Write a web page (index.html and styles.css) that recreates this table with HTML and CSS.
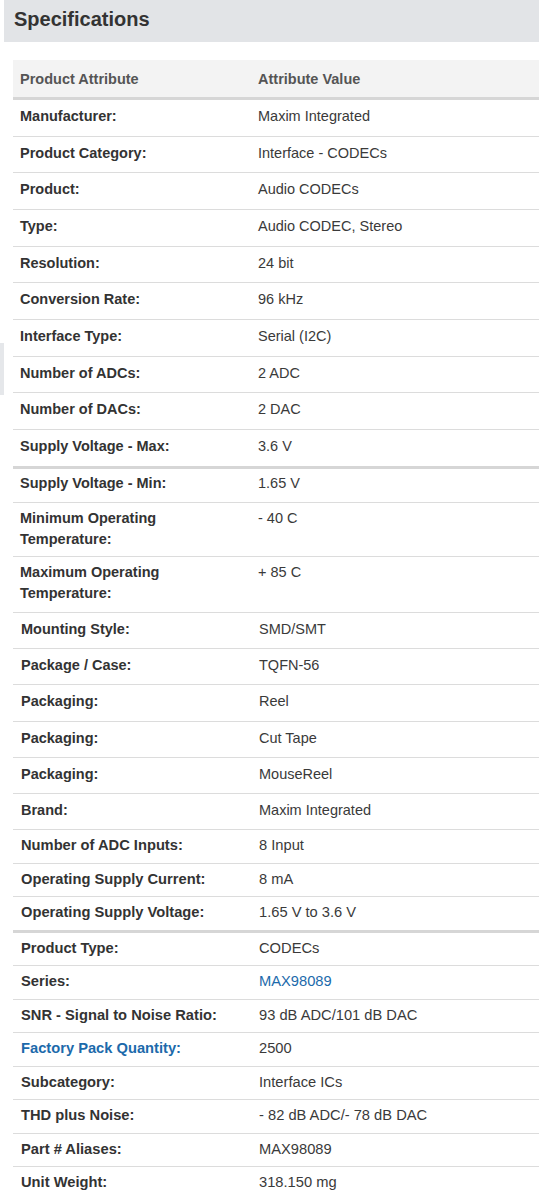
FILE: index.html
```html
<!DOCTYPE html>
<html lang="en">
<head>
<meta charset="utf-8">
<title>Specifications</title>
<link rel="stylesheet" href="styles.css">
</head>
<body>
<div class="page">
  <div class="side-tab"></div>
  <h2 class="section-title">Specifications</h2>
  <div class="spec-table">
    <div class="row head-row"><div class="cell">Product Attribute</div><div class="cell">Attribute Value</div></div>

    <div class="group grp-a">
      <div class="row"><div class="cell label">Manufacturer:</div><div class="cell value">Maxim Integrated</div></div>
      <div class="row"><div class="cell label">Product Category:</div><div class="cell value">Interface - CODECs</div></div>
      <div class="row"><div class="cell label">Product:</div><div class="cell value">Audio CODECs</div></div>
      <div class="row"><div class="cell label">Type:</div><div class="cell value">Audio CODEC, Stereo</div></div>
      <div class="row"><div class="cell label">Resolution:</div><div class="cell value">24 bit</div></div>
      <div class="row"><div class="cell label">Conversion Rate:</div><div class="cell value">96 kHz</div></div>
      <div class="row"><div class="cell label">Interface Type:</div><div class="cell value">Serial (I2C)</div></div>
      <div class="row"><div class="cell label">Number of ADCs:</div><div class="cell value">2 ADC</div></div>
      <div class="row"><div class="cell label">Number of DACs:</div><div class="cell value">2 DAC</div></div>
      <div class="row thick"><div class="cell label">Supply Voltage - Max:</div><div class="cell value">3.6 V</div></div>
    </div>

    <div class="group grp-b">
      <div class="row short"><div class="cell label">Supply Voltage - Min:</div><div class="cell value">1.65 V</div></div>
      <div class="row two-line"><div class="cell label">Minimum Operating<br>Temperature:</div><div class="cell value">- 40 C</div></div>
      <div class="row two-line tall"><div class="cell label">Maximum Operating<br>Temperature:</div><div class="cell value">+ 85 C</div></div>
      <div class="row"><div class="cell label">Mounting Style:</div><div class="cell value">SMD/SMT</div></div>
      <div class="row"><div class="cell label">Package / Case:</div><div class="cell value">TQFN-56</div></div>
      <div class="row"><div class="cell label">Packaging:</div><div class="cell value">Reel</div></div>
      <div class="row"><div class="cell label">Packaging:</div><div class="cell value">Cut Tape</div></div>
      <div class="row"><div class="cell label">Packaging:</div><div class="cell value">MouseReel</div></div>
      <div class="row"><div class="cell label">Brand:</div><div class="cell value">Maxim Integrated</div></div>
    </div>

    <div class="group grp-c">
      <div class="row"><div class="cell label">Number of ADC Inputs:</div><div class="cell value">8 Input</div></div>
      <div class="row"><div class="cell label">Operating Supply Current:</div><div class="cell value">8 mA</div></div>
      <div class="row thick"><div class="cell label">Operating Supply Voltage:</div><div class="cell value">1.65 V to 3.6 V</div></div>
    </div>

    <div class="group grp-d">
      <div class="row"><div class="cell label">Product Type:</div><div class="cell value">CODECs</div></div>
      <div class="row"><div class="cell label">Series:</div><div class="cell value"><a class="link" href="#">MAX98089</a></div></div>
      <div class="row"><div class="cell label">SNR - Signal to Noise Ratio:</div><div class="cell value">93 dB ADC/101 dB DAC</div></div>
      <div class="row"><div class="cell label"><a class="link label-link" href="#">Factory Pack Quantity:</a></div><div class="cell value">2500</div></div>
      <div class="row"><div class="cell label">Subcategory:</div><div class="cell value">Interface ICs</div></div>
      <div class="row"><div class="cell label">THD plus Noise:</div><div class="cell value">- 82 dB ADC/- 78 dB DAC</div></div>
      <div class="row"><div class="cell label">Part # Aliases:</div><div class="cell value">MAX98089</div></div>
      <div class="row last"><div class="cell label">Unit Weight:</div><div class="cell value">318.150 mg</div></div>
    </div>
  </div>
</div>
</body>
</html>
```

FILE: styles.css
```css
* { box-sizing: border-box; }

html, body {
  margin: 0;
  padding: 0;
  background: #fff;
}

body {
  font-family: "Liberation Sans", Arial, sans-serif;
  font-size: 14.5px;
  color: #333;
}

.page {
  position: relative;
  width: 539px;
}

.side-tab {
  position: absolute;
  left: 0;
  top: 343px;
  width: 4px;
  height: 52px;
  background: #e5e7ea;
}

.section-title {
  margin: 0 0 0 4px;
  height: 42px;
  padding: 6px 10px 0;
  background: #e2e4e7;
  font-size: 20px;
  font-weight: bold;
  line-height: 26px;
  color: #333;
}

.spec-table {
  margin: 18px 0 0 13px;
  width: 526px;
}

.row {
  display: grid;
  grid-template-columns: 238px 1fr;
  align-items: start;
  border-bottom: 1px solid #dcdcdc;
}

.row.thick {
  border-bottom: 3px solid #d6d6d6;
}

.row.last {
  border-bottom: 0;
}

.cell {
  padding: 6px 7px 0;
  line-height: 21px;
}

.head-row {
  height: 40px;
  background: #f3f3f3;
  border-bottom: 3px solid #d6d6d6;
  font-weight: bold;
  color: #555;
}

.head-row .cell {
  padding-top: 9px;
}

.label {
  font-weight: bold;
  color: #333;
}

.value {
  color: #3a3a3a;
}

.link {
  color: #1c6aab;
  text-decoration: none;
}

.label-link {
  font-weight: bold;
}

.grp-a .row { height: 36.67px; }
.grp-a .row.thick { height: 38.67px; }

.grp-b .row { height: 36.28px; }
.grp-b .row .cell { padding-left: 8px; }
.grp-b .row.short { height: 34.3px; }
.grp-b .row.short .cell { padding-top: 4px; padding-left: 7px; }
.grp-b .row.two-line { height: 54px; }
.grp-b .row.two-line.tall { height: 56px; }
.grp-b .row.two-line .cell { padding-top: 5px; padding-left: 7px; }

.grp-c,
.grp-d { font-size: 14.7px; }

.grp-c .row { height: 33.4px; }
.grp-c .row.thick { height: 35.4px; }
.grp-c .row .cell { padding: 5px 8px 0; }

.grp-d .row { height: 33.5px; }
.grp-d .row .cell { padding: 5px 8px 0; }
```
